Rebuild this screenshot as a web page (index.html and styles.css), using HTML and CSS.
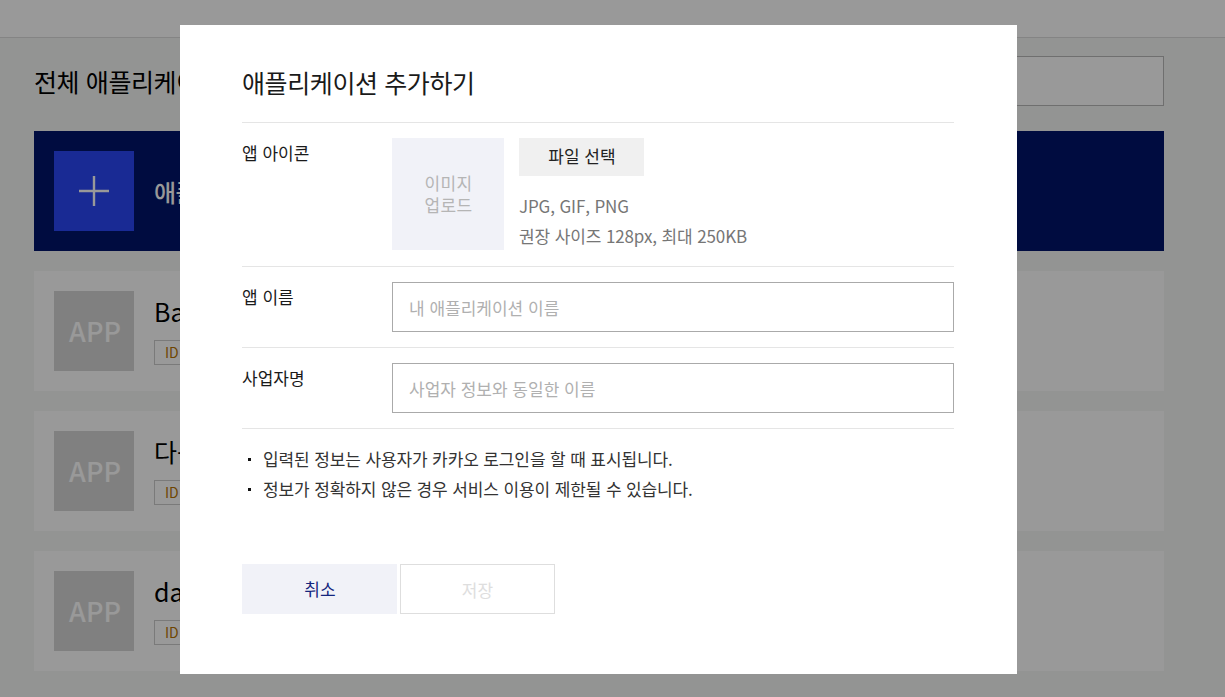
FILE: index.html
```html
<!DOCTYPE html>
<html lang="ko">
<head>
<meta charset="utf-8">
<title>애플리케이션 추가하기</title>
<link rel="stylesheet" href="styles.css">
</head>
<body>
<header class="topbar"></header>
<main class="page">
  <div class="page-head">
    <h1 class="page-title">전체 애플리케이션</h1>
    <div class="search"></div>
  </div>
  <div class="card card-add">
    <div class="thumb thumb-add">
      <svg width="30" height="30" viewBox="0 0 30 30" aria-hidden="true"><path d="M15 0v30M0 15h30" stroke="#fff" stroke-width="2.4" fill="none"/></svg>
    </div>
    <div class="add-label">애플리케이션 추가하기</div>
  </div>
  <div class="card">
    <div class="thumb">APP</div>
    <div class="info"><div class="name">Basic</div><div class="badge"><span>ID</span></div></div>
  </div>
  <div class="card">
    <div class="thumb">APP</div>
    <div class="info"><div class="name">다음</div><div class="badge"><span>ID</span></div></div>
  </div>
  <div class="card">
    <div class="thumb">APP</div>
    <div class="info"><div class="name">daum</div><div class="badge"><span>ID</span></div></div>
  </div>
</main>
<div class="overlay">
  <section class="modal">
    <h2 class="modal-title">애플리케이션 추가하기</h2>
    <div class="row row-icon">
      <div class="label">앱 아이콘</div>
      <div class="upload">
        <div class="preview">이미지<br>업로드</div>
        <div class="file-col">
          <button class="file-btn" type="button">파일 선택</button>
          <p class="hint">JPG, GIF, PNG<br>권장 사이즈 128px, 최대 250KB</p>
        </div>
      </div>
    </div>
    <div class="row">
      <div class="label">앱 이름</div>
      <input class="field" type="text" placeholder="내 애플리케이션 이름">
    </div>
    <div class="row">
      <div class="label">사업자명</div>
      <input class="field" type="text" placeholder="사업자 정보와 동일한 이름">
    </div>
    <ul class="notes">
      <li>입력된 정보는 사용자가 카카오 로그인을 할 때 표시됩니다.</li>
      <li>정보가 정확하지 않은 경우 서비스 이용이 제한될 수 있습니다.</li>
    </ul>
    <div class="actions">
      <button class="btn btn-cancel" type="button">취소</button>
      <button class="btn btn-save" type="button">저장</button>
    </div>
  </section>
</div>
</body>
</html>
```
FILE: styles.css
```css
* { box-sizing: border-box; }
html, body { margin: 0; height: 697px; overflow: hidden; }
body {
  background: #f5f7f6;
  font-family: "Noto Sans CJK KR", "Noto Sans", sans-serif;
  color: #1a1a1a;
}
.topbar { height: 38px; background: #fff; border-bottom: 1px solid #ddd; }
.page { padding: 18px 61px 0 34px; display: flex; flex-direction: column; gap: 20px; }
.page-head { display: flex; justify-content: space-between; align-items: center; height: 50px; margin-bottom: 5px; }
.page-title { margin: 0; font-size: 25px; font-weight: 400; letter-spacing: -0.4px; line-height: 50px; color: #000; }
.search { width: 400px; height: 50px; background: #fff; border: 1px solid #b9b9b9; }
.card { height: 120px; background: #fff; padding: 20px; display: flex; gap: 20px; }
.card-add { background: #00156b; align-items: center; }
.thumb {
  width: 80px; height: 80px; flex: none;
  background: #d6d6d6; color: #fff;
  display: flex; align-items: center; justify-content: center;
  font-size: 27px; font-weight: 500; padding: 0 0 2px 2px;
}
.thumb-add { background: #2b46f7; padding: 0; }
.add-label { color: #fff; font-size: 24px; font-weight: 500; letter-spacing: -0.5px; }
.info { display: flex; flex-direction: column; gap: 9px; }
.name { font-size: 25px; line-height: 40px; color: #000; }
.badge { height: 25px; width: 200px; border: 1px solid #ccc; padding-left: 10px; font-size: 14px; line-height: 23px; color: #b87400; }
.overlay {
  position: fixed; inset: 0; background: rgba(0,0,0,.4);
  padding: 25px 208px 23px 180px;
}
.modal { width: 837px; height: 649px; background: #fff; padding: 0 63px 0 62px; }
.modal-title {
  margin: 0; height: 98px; padding-top: 38px;
  font-size: 25px; font-weight: 400; line-height: 38px; letter-spacing: -0.4px;
  color: #1a1a1a; border-bottom: 1px solid #e5e5e5;
}
.row { display: flex; height: 81px; padding-top: 15px; border-bottom: 1px solid #e5e5e5; }
.row-icon { height: 144px; }
.label { width: 150px; flex: none; font-size: 17px; line-height: 28px; padding-top: 1px; color: #1a1a1a; }
.upload { display: flex; gap: 15px; }
.preview {
  width: 112px; height: 112px; background: #f1f2f8; color: #b5b5b5;
  font-size: 17px; line-height: 22px; letter-spacing: 0.3px; text-align: center;
  display: flex; align-items: center; justify-content: center; padding-left: 1px;
}
.file-col { display: flex; flex-direction: column; }
.file-btn {
  width: 125px; height: 38px; border: 0; background: #f0f0f0; color: #222;
  font: inherit; font-size: 17px; padding: 0 0 4px 1px;
}
.hint { margin: 15px 0 0; font-size: 17px; line-height: 30px; color: #767676; letter-spacing: -0.12px; }
.field {
  width: 562px; height: 50px; border: 1px solid #aaa; padding: 0 16px;
  font: inherit; font-size: 17px; outline: none;
}
.field::placeholder { color: #b0b0b0; opacity: 1; }
.notes { list-style: none; margin: 15px 0 0; padding: 0; font-size: 17px; line-height: 30px; letter-spacing: -0.12px; color: #333; }
.notes li { position: relative; padding-left: 21px; }
.notes li::before { content: ""; position: absolute; left: 6px; top: 14px; width: 3px; height: 3px; background: #111; }
.actions { display: flex; gap: 3px; margin-top: 60px; }
.btn { width: 155px; height: 50px; font: inherit; font-size: 17px; padding: 0; }
.btn-cancel { border: 0; background: #f1f2f8; color: #14257d; padding: 0 0 2px 1px; }
.btn-save { background: #fff; border: 1px solid #dedede; color: #dedede; }
```
